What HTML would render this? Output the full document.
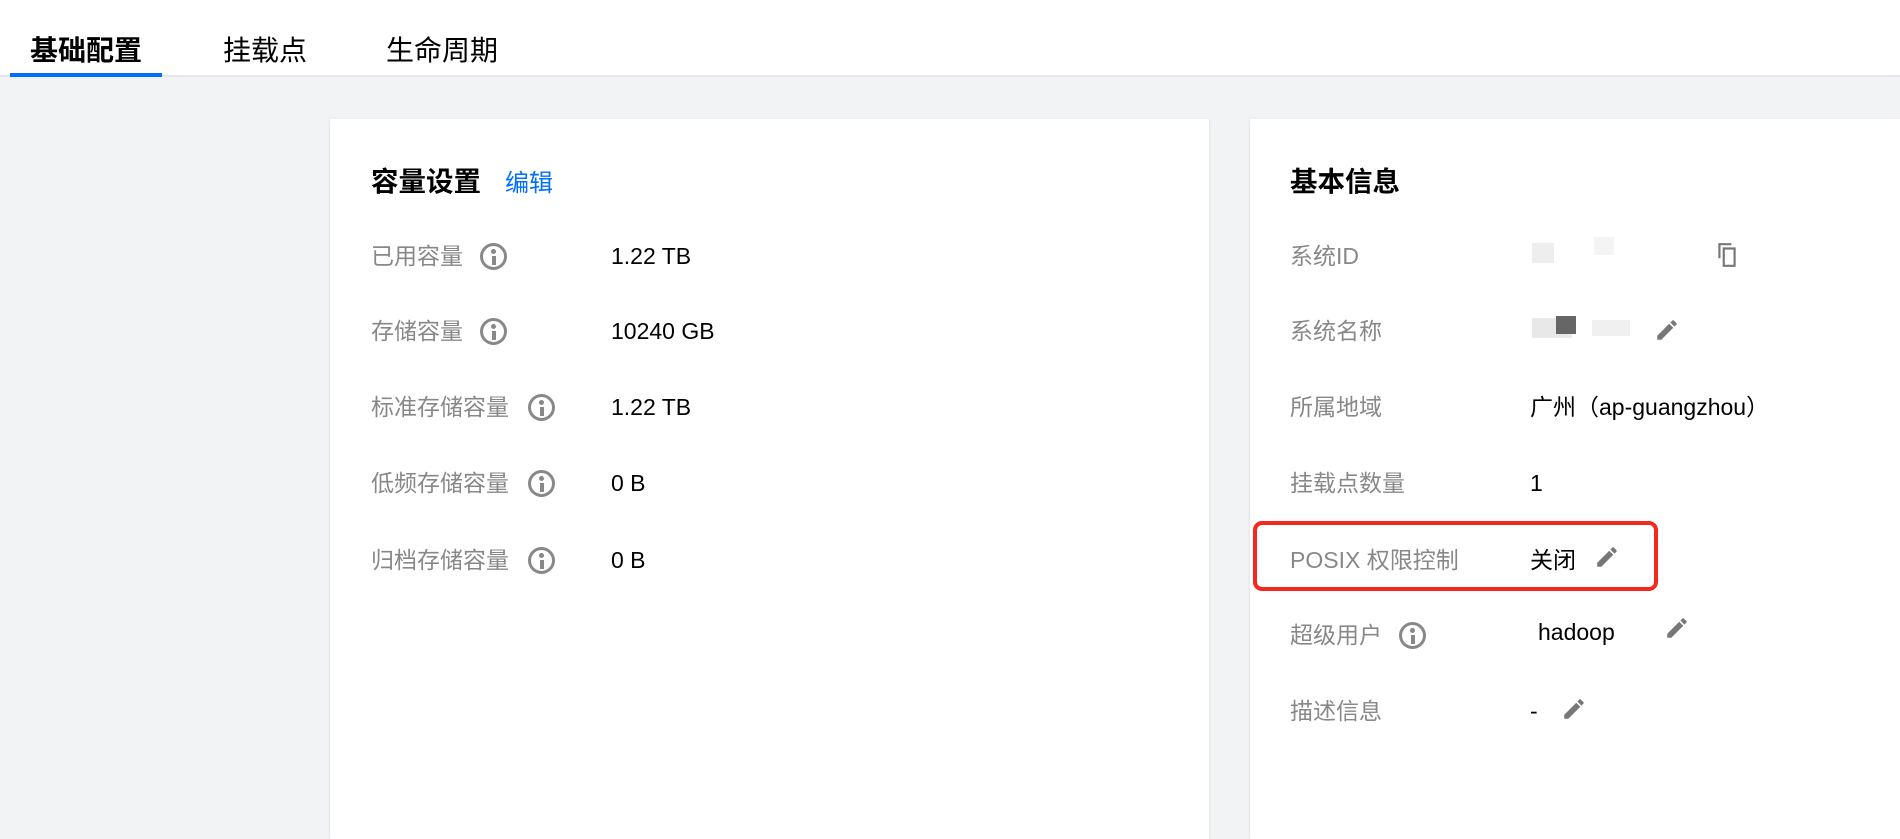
<!DOCTYPE html>
<html><head><meta charset="utf-8"><style>
*{margin:0;padding:0;box-sizing:border-box}
body{width:1900px;height:820px;overflow:hidden;background:#f2f3f5;font-family:"Liberation Sans","Noto Sans CJK SC",sans-serif;position:relative}
.hdr{position:absolute;left:0;top:0;width:1900px;height:77px;background:#fff;border-bottom:2px solid #e5e7eb}
.tab{position:absolute;top:29px;font-size:28px;color:#000}
.ul{position:absolute;left:10px;top:73px;width:152px;height:4px;background:#006eff}
.card{position:absolute;top:119px;height:720px;background:#fff;box-shadow:0 1px 3px rgba(0,0,0,.12)}
.t{position:absolute;font-size:27.5px;font-weight:bold;color:#000;line-height:32px}
.l{position:absolute;font-size:23px;color:#888;line-height:30px}
.v{position:absolute;font-size:23px;color:#000;line-height:30px}
.ic{position:absolute;width:27px;height:27px;border:3px solid #888;border-radius:50%}
.ic:before{content:"";position:absolute;left:8px;top:3px;width:5px;height:5px;background:#888;border-radius:50%}
.ic:after{content:"";position:absolute;left:8.5px;top:10px;width:4px;height:9px;background:#888}
.pen{position:absolute;width:26px;height:26px}
</style></head><body>
<div class="hdr"></div>
<div class="tab" style="left:30px;font-weight:bold">基础配置</div>
<div class="tab" style="left:223px">挂载点</div>
<div class="tab" style="left:386px">生命周期</div>
<div class="ul"></div>

<div class="card" style="left:330px;width:879px"></div>
<div class="card" style="left:1250px;width:660px"></div>

<div class="t" style="left:371px;top:166px">容量设置</div>
<div class="t" style="left:505px;top:168px;font-weight:normal;color:#006eff;font-size:24px">编辑</div>

<div class="l" style="left:371px;top:241px">已用容量</div><div class="ic" style="left:480px;top:243px"></div><div class="v" style="left:611px;top:241px">1.22 TB</div>
<div class="l" style="left:371px;top:316px">存储容量</div><div class="ic" style="left:480px;top:318px"></div><div class="v" style="left:611px;top:316px">10240 GB</div>
<div class="l" style="left:371px;top:392px">标准存储容量</div><div class="ic" style="left:528px;top:394px"></div><div class="v" style="left:611px;top:392px">1.22 TB</div>
<div class="l" style="left:371px;top:468px">低频存储容量</div><div class="ic" style="left:528px;top:470px"></div><div class="v" style="left:611px;top:468px">0 B</div>
<div class="l" style="left:371px;top:545px">归档存储容量</div><div class="ic" style="left:528px;top:547px"></div><div class="v" style="left:611px;top:545px">0 B</div>

<div class="t" style="left:1290px;top:166px">基本信息</div>
<div class="l" style="left:1290px;top:241px">系统ID</div>
<div style="position:absolute;left:1532px;top:243px;width:22px;height:20px;background:#eee"></div>
<div style="position:absolute;left:1594px;top:237px;width:20px;height:18px;background:#f4f4f4"></div>
<svg class="pen" style="left:1714px;top:242px" viewBox="0 0 24 24"><path fill="#777" d="M16 1H4v14h2V3h10zM8 5h12v18H8zm2 2v14h8V7z"/></svg>
<div class="l" style="left:1290px;top:316px">系统名称</div>
<div style="position:absolute;left:1532px;top:318px;width:40px;height:20px;background:#e8e8e8"></div>
<div style="position:absolute;left:1556px;top:316px;width:20px;height:18px;background:#666"></div>
<div style="position:absolute;left:1592px;top:320px;width:38px;height:16px;background:#f0f0f0"></div>
<svg class="pen" style="left:1654px;top:317px" viewBox="0 0 24 24"><path fill="#777" d="M3 17.25V21h3.75L17.8 9.94l-3.75-3.75zM20.7 7.04a1 1 0 000-1.41l-2.34-2.34a1 1 0 00-1.41 0l-1.83 1.83 3.75 3.75z"/></svg>
<div class="l" style="left:1290px;top:392px">所属地域</div><div class="v" style="left:1530px;top:392px">广州（ap-guangzhou）</div>
<div class="l" style="left:1290px;top:468px">挂载点数量</div><div class="v" style="left:1530px;top:468px">1</div>
<div style="position:absolute;left:1253px;top:521px;width:405px;height:70px;border:4px solid #f5281e;border-radius:9px"></div>
<div class="l" style="left:1290px;top:545px">POSIX 权限控制</div><div class="v" style="left:1530px;top:545px">关闭</div>
<svg class="pen" style="left:1594px;top:544px" viewBox="0 0 24 24"><path fill="#777" d="M3 17.25V21h3.75L17.8 9.94l-3.75-3.75zM20.7 7.04a1 1 0 000-1.41l-2.34-2.34a1 1 0 00-1.41 0l-1.83 1.83 3.75 3.75z"/></svg>
<div class="l" style="left:1290px;top:620px">超级用户</div><div class="ic" style="left:1399px;top:622px"></div><div class="v" style="left:1538px;top:617px">hadoop</div>
<svg class="pen" style="left:1664px;top:615px" viewBox="0 0 24 24"><path fill="#777" d="M3 17.25V21h3.75L17.8 9.94l-3.75-3.75zM20.7 7.04a1 1 0 000-1.41l-2.34-2.34a1 1 0 00-1.41 0l-1.83 1.83 3.75 3.75z"/></svg>
<div class="l" style="left:1290px;top:696px">描述信息</div><div class="v" style="left:1530px;top:696px">-</div>
<svg class="pen" style="left:1561px;top:696px" viewBox="0 0 24 24"><path fill="#777" d="M3 17.25V21h3.75L17.8 9.94l-3.75-3.75zM20.7 7.04a1 1 0 000-1.41l-2.34-2.34a1 1 0 00-1.41 0l-1.83 1.83 3.75 3.75z"/></svg>
</body></html>
